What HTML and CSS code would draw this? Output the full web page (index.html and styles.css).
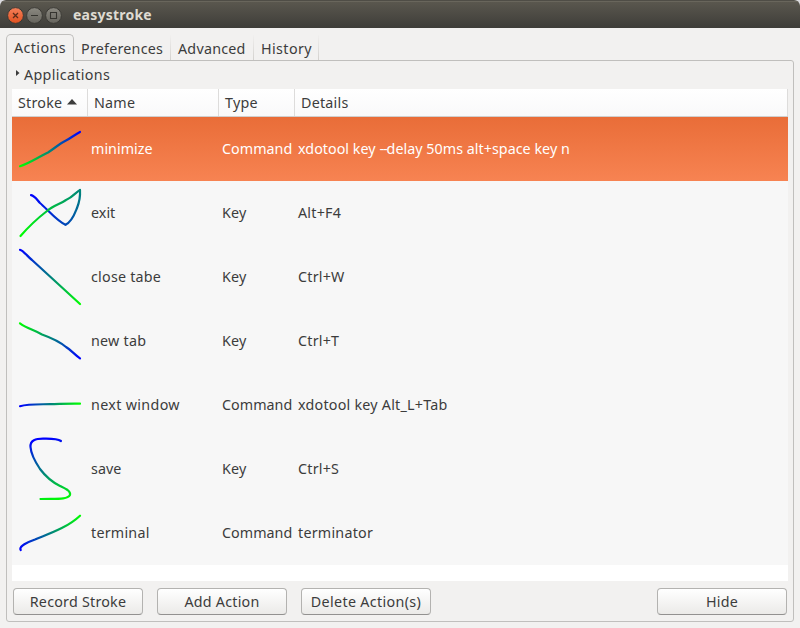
FILE: index.html
```html
<!DOCTYPE html>
<html lang="en">
<head>
<meta charset="utf-8">
<title>easystroke</title>
<link rel="stylesheet" href="styles.css">
</head>
<body>
<div class="window">
  <header class="titlebar">
    <svg class="controls" width="58" height="20" viewBox="5 4 58 20" fill="none">
      <defs>
        <linearGradient id="close" x1="0" y1="0" x2="0" y2="1"><stop offset="0" stop-color="#f4805a"/><stop offset="1" stop-color="#e2511f"/></linearGradient>
        <linearGradient id="btn" x1="0" y1="0" x2="0" y2="1"><stop offset="0" stop-color="#8b8981"/><stop offset="1" stop-color="#66645d"/></linearGradient>
      </defs>
      <circle cx="15.5" cy="14.5" r="7.900" fill="url(#close)" stroke="#3b3a35"/>
      <path d="M13 12l5 5M18 12l-5 5" stroke="#5a2c1a" stroke-width="1.3"/>
      <circle cx="34.5" cy="14.5" r="7.900" fill="url(#btn)" stroke="#3b3a35"/>
      <path d="M31 14.5h7" stroke="#35342f" stroke-width="1.2"/>
      <circle cx="53.5" cy="14.5" r="7.900" fill="url(#btn)" stroke="#3b3a35"/>
      <path d="M50.500 11.500h6v6h-6z" stroke="#35342f" stroke-width="1.1"/>
    </svg>
    <h1 class="title">easystroke</h1>
  </header>
  <nav class="tabs">
    <span class="tab active t-actions">Actions</span>
    <span class="tab t-prefs">Preferences</span>
    <span class="tab t-adv">Advanced</span>
    <span class="tab t-hist">History</span>
  </nav>
  <main class="page">
    <div class="expander"><svg width="4" height="6" viewBox="0 0 4 6"><path d="M0 0l3.500 3L0 6z" fill="#3c3c3c"/></svg><span>Applications</span></div>
    <div class="table">
      <div class="row head">
        <span class="cell">Stroke<svg class="sort" width="10" height="6" viewBox="0 0 10 6"><path d="M0 5.500L5 0l5 5.500z" fill="#3c3c3c"/></svg></span>
        <span class="cell">Name</span><span class="cell">Type</span><span class="cell">Details</span>
      </div>
      <div class="row selected">
        <svg class="stroke" width="64" height="64" viewBox="18 117 64 64">
          <linearGradient id="g1" gradientUnits="userSpaceOnUse" x1="20" y1="166" x2="80" y2="132"><stop stop-color="#0f0"/><stop offset="1" stop-color="#00f"/></linearGradient>
          <path stroke="url(#g1)" d="M20 166.300C28 164 37 158 48 152.500C55 148 59 144 66 140.500C71 138 75 134.500 80 132"/>
        </svg>
        <span class="cell tight">minimize</span><span class="cell tight">Command</span><span class="cell tight">xdotool key <span class="dashes">--</span>delay 50ms alt+space key n</span>
      </div>
      <div class="row">
        <svg class="stroke" width="64" height="64" viewBox="18 181 64 64">
          <linearGradient id="g2" gradientUnits="userSpaceOnUse" x1="31" y1="195" x2="65" y2="225"><stop stop-color="#00f"/><stop offset="1" stop-color="#0048b7"/></linearGradient>
          <linearGradient id="g3" gradientUnits="userSpaceOnUse" x1="65" y1="225" x2="80" y2="190"><stop stop-color="#0048b7"/><stop offset="1" stop-color="#008679"/></linearGradient>
          <linearGradient id="g4" gradientUnits="userSpaceOnUse" x1="80" y1="190" x2="20" y2="236"><stop stop-color="#008679"/><stop offset="1" stop-color="#0f0"/></linearGradient>
          <path stroke="url(#g2)" d="M31 195.200C35 196 37 200 40 203C47 209 58 222 65.500 224.700"/>
          <path stroke="url(#g3)" d="M65.500 224.700C72 222 75 213 77 208C79 203 80.500 198 80 190"/>
          <path stroke="url(#g4)" d="M80 190C76 192 73 197 66 200C60 204 53 206 47 211C38 218 30 225 20.500 236"/>
        </svg>
        <span class="cell tight">exit</span><span class="cell">Key</span><span class="cell">Alt+F4</span>
      </div>
      <div class="row">
        <svg class="stroke" width="64" height="64" viewBox="18 245 64 64">
          <linearGradient id="g5" gradientUnits="userSpaceOnUse" x1="20" y1="250" x2="80" y2="304"><stop stop-color="#00f"/><stop offset="1" stop-color="#0f0"/></linearGradient>
          <path stroke="url(#g5)" d="M20 249.800C23 250 28 257 32 260L80 304"/>
        </svg>
        <span class="cell">close tabe</span><span class="cell">Key</span><span class="cell">Ctrl+W</span>
      </div>
      <div class="row">
        <svg class="stroke" width="64" height="64" viewBox="18 309 64 64">
          <linearGradient id="g6" gradientUnits="userSpaceOnUse" x1="20" y1="323" x2="80" y2="358"><stop stop-color="#0f0"/><stop offset="1" stop-color="#00f"/></linearGradient>
          <path stroke="url(#g6)" d="M20 323.300C26 328 34 330 42 334.500C49 337 60 342 66 347C71 350 75 355 80 358.300"/>
        </svg>
        <span class="cell">new tab</span><span class="cell">Key</span><span class="cell">Ctrl+T</span>
      </div>
      <div class="row">
        <svg class="stroke" width="64" height="64" viewBox="18 373 64 64">
          <linearGradient id="g7" gradientUnits="userSpaceOnUse" x1="20" y1="405" x2="80" y2="405"><stop stop-color="#00f"/><stop offset="1" stop-color="#0f0"/></linearGradient>
          <path stroke="url(#g7)" d="M20 406.200C28 403.800 39 404.400 50 404.200S66 403.500 80 403.700"/>
        </svg>
        <span class="cell wide">next window</span><span class="cell tight">Command</span><span class="cell">xdotool key Alt_L+Tab</span>
      </div>
      <div class="row">
        <svg class="stroke" width="64" height="64" viewBox="18 437 64 64">
          <linearGradient id="g8" gradientUnits="userSpaceOnUse" x1="52" y1="438" x2="62" y2="500"><stop stop-color="#00f"/><stop offset=".2" stop-color="#0033cc"/><stop offset=".55" stop-color="#008a75"/><stop offset="1" stop-color="#0f0"/></linearGradient>
          <path stroke="url(#g8)" d="M61 441C57 438.300 50 438.700 43 438.700C36 438.700 30 440 30.500 447C31 454 36 463 40 469C46 477 54 483 60 486C66 489 71 491 70 495C67 500 56 498.500 40.500 499"/>
        </svg>
        <span class="cell tight">save</span><span class="cell">Key</span><span class="cell">Ctrl+S</span>
      </div>
      <div class="row">
        <svg class="stroke" width="64" height="64" viewBox="18 501 64 64">
          <linearGradient id="g9" gradientUnits="userSpaceOnUse" x1="20" y1="550" x2="80" y2="516"><stop stop-color="#00f"/><stop offset="1" stop-color="#0f0"/></linearGradient>
          <path stroke="url(#g9)" d="M20.700 550C18.500 546 28 542 35 539.500C48 534 67 528 80 515.700"/>
        </svg>
        <span class="cell">terminal</span><span class="cell tight">Command</span><span class="cell">terminator</span>
      </div>
    </div>
    <footer class="actions">
      <button>Record Stroke</button><button>Add Action</button><button class="wide">Delete Action(s)</button><button class="hide">Hide</button>
    </footer>
  </main>
</div>
</body>
</html>
```
FILE: styles.css
```css
* { box-sizing: border-box; }
body {
  margin: 0;
  background: #dcdce0;
  font: 14.3px/20px "Noto Sans", "Open Sans", sans-serif;
  letter-spacing: .23px;
  color: #3c3c3c;
}
.window {
  width: 800px;
  height: 628px;
  display: flex;
  flex-direction: column;
  background: #f2f1f0;
  border-radius: 6px 6px 0 0;
  overflow: hidden;
}
.titlebar {
  height: 28px;
  flex: none;
  display: flex;
  align-items: center;
  padding-left: 5px;
  background: linear-gradient(#5b584f, #3e3d39);
  border-top: 1px solid #4f4d46;
  box-shadow: inset 0 1px #69665c;
}
.title {
  margin: 0 0 0 10px;
  font-size: 14px;
  line-height: 20px;
  font-weight: 700;
  color: #dfdbd2;
}
.tabs {
  height: 33px;
  flex: none;
  display: flex;
  align-items: flex-end;
  margin: 0 6px -1px;
  position: relative;
}
.tab {
  height: 25px;
  margin-bottom: 1px;
  padding: 4px 0 0 7px;
  white-space: nowrap;
  border-right: 1px solid;
  border-image: linear-gradient(#f2f1f0, #d2d0cd) 1;
}
.tab.active {
  width: 68px;
  height: 27px;
  margin: 0;
  padding-top: 3px;
  border: 1px solid #c0bfbd;
  border-bottom: 0;
  border-image: none;
  border-radius: 5px 5px 0 0;
  background: #f2f1f0;
}
.t-actions, .t-hist { letter-spacing: .4px; }
.t-prefs { width: 97px; }
.t-adv { width: 83px; }
.t-hist { width: 65px; }
.page {
  width: 788px;
  height: 562px;
  margin-left: 6px;
  padding: 5px 5px 0;
  display: flex;
  flex-direction: column;
  border: 1px solid #c0bfbd;
  border-radius: 0 3px 3px 3px;
}
.expander {
  height: 23px;
  display: flex;
  gap: 4px;
  padding-left: 4px;
  letter-spacing: .33px;
}
.expander svg { margin-top: 4px; }
.expander span { margin-top: -1px; }
.table {
  height: 492px;
  background: #fff;
}
.row {
  height: 64px;
  display: grid;
  grid-template-columns: 76px 131px 76px 1fr;
  align-items: center;
  background: #f7f7f7;
}
.row .cell { padding-left: 3px; white-space: nowrap; }
.row.head {
  height: 28px;
  background: linear-gradient(#fff, #f9f9fa);
  border-bottom: 1px solid #d0cfce;
}
.head .cell {
  height: 27px;
  padding: 4px 0 0 6px;
  border-right: 1px solid #dddcdb;
}
.sort { margin: 0 0 3px 5px; }
.row.selected {
  color: #fff;
  background: linear-gradient(#e96d38, #f78352);
}
.stroke {
  margin-left: 6px;
  fill: none;
  stroke-width: 2.2;
  stroke-linecap: round;
  stroke-linejoin: round;
}
.tight { letter-spacing: .03px; }
.wide { letter-spacing: .34px; }
.dashes { letter-spacing: -1px; }
.actions {
  display: flex;
  gap: 14px;
  padding: 7px 1px 0;
}
.actions button {
  width: 130px;
  height: 27px;
  padding: 0;
  font: inherit;
  letter-spacing: .23px;
  color: #3c3c3c;
  white-space: nowrap;
  background: linear-gradient(#fff, #ebeae8);
  border: 1px solid #b3b2b0;
  border-bottom-color: #929190;
  border-radius: 4px;
}
.actions .wide { letter-spacing: .34px; }
.actions .hide { margin-left: auto; }
```
